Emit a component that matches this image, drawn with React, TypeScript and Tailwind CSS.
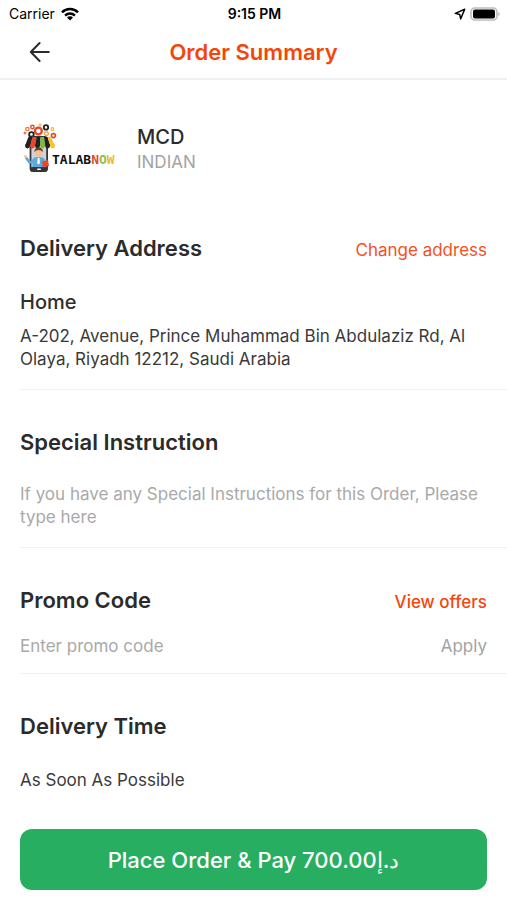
import React from "react";

function StatusBar() {
  return (
    <div className="grid h-7 grid-cols-3 items-center pr-[7px] pl-[9px] text-sm text-black">
      <div className="flex items-center gap-[6px]">
        <span>Carrier</span>
        <svg width="18" height="14" viewBox="0 0 18 14" fill="none" stroke="#000" strokeWidth="2.5" aria-hidden="true">
          <path d="M1 5.4a11.4 11.4 0 0 1 16 0" />
          <path d="M4.1 8.6a7 7 0 0 1 9.8 0" />
          <path d="M9 13.6l-3-3a4.2 4.2 0 0 1 6 0z" fill="#000" stroke="none" />
        </svg>
      </div>
      <div className="text-center font-semibold">9:15 PM</div>
      <div className="flex items-center justify-end gap-1">
        <svg width="12" height="12" viewBox="0 0 13 13" fill="none" stroke="#000" strokeWidth="1.6" strokeLinejoin="round" aria-hidden="true">
          <path d="M11.6 1.4L1.4 5.8l4.8 1.2 1 4.8z" />
        </svg>
        <svg width="30" height="15" viewBox="0 0 30 15" aria-hidden="true">
          <rect x="1" y="1" width="26" height="12" rx="4" fill="#fff" stroke="#bdbdbd" strokeWidth="1.6" />
          <rect x="3" y="2.6" width="22" height="8.8" rx="2" fill="#000" />
          <path d="M28.3 4.9q1.6.8 1.6 2.1t-1.6 2.1z" fill="#bdbdbd" />
        </svg>
      </div>
    </div>
  );
}

function Logo() {
  return (
    <svg width="97" height="54" viewBox="0 0 97 54" role="img" aria-label="Talabnow" className="shrink-0">
      <g fill="#fff">
        <circle cx="18.4" cy="11" r="3.4" stroke="#e8472b" strokeWidth="2.4" />
        <circle cx="26" cy="7.4" r="2.2" stroke="#222" strokeWidth="1.8" />
        <circle cx="11.4" cy="14.4" r="2.3" stroke="#222" strokeWidth="1.8" />
        <circle cx="7.4" cy="9" r="1.7" stroke="#f0743c" strokeWidth="1.3" />
        <circle cx="12.4" cy="7" r="1.7" stroke="#e8472b" strokeWidth="1.4" />
        <circle cx="20" cy="5" r="1.1" stroke="#f0a63c" strokeWidth="1" />
        <circle cx="5" cy="13" r="1" stroke="#e8472b" strokeWidth="1" />
        <circle cx="26.4" cy="13.6" r="1.9" stroke="#f3a83c" strokeWidth="1.4" />
        <circle cx="32.4" cy="9" r="1.4" stroke="#f3b23c" strokeWidth="1.1" />
        <circle cx="33.4" cy="15.6" r="2" stroke="#e8472b" strokeWidth="1.6" />
      </g>
      <rect x="10.5" y="17" width="16.6" height="34" rx="2.6" fill="#cdd4da" stroke="#33373c" strokeWidth="1.8" />
      <rect x="10.5" y="47" width="16.6" height="4.4" rx="1.5" fill="#33373c" />
      <rect x="17" y="48.6" width="4" height="1.4" rx=".7" fill="#fff" />
      <path d="M8.4 17h4.2l-2.6 9H5z" fill="#222" />
      <path d="M12.6 17h4.1l-1.7 9h-5z" fill="#e8472b" />
      <path d="M16.7 17h3.6v9H15z" fill="#222" />
      <path d="M20.3 17H24l1.4 9h-5.1z" fill="#7fb93b" />
      <path d="M24 17h3.6l2.8 9h-5z" fill="#222" />
      <path d="M27.6 17h3.2l4.2 9h-4.6z" fill="#f5c330" />
      <g>
        <circle cx="7.5" cy="26" r="2.4" fill="#222" />
        <circle cx="12.5" cy="26" r="2.4" fill="#e8472b" />
        <circle cx="17.5" cy="26" r="2.4" fill="#222" />
        <circle cx="22.6" cy="26" r="2.4" fill="#7fb93b" />
        <circle cx="27.6" cy="26" r="2.4" fill="#222" />
        <circle cx="32.6" cy="26" r="2.4" fill="#f5c330" />
      </g>
      <path d="M12.4 47v-7q0-3 6.2-3t6.4 3v7z" fill="#5fa8dc" />
      <path d="M14 41l-4.4 1.4L6 37.6" fill="none" stroke="#5fa8dc" strokeWidth="2.6" strokeLinejoin="round" />
      <circle cx="5.6" cy="36.4" r="1.5" fill="#f3c29c" />
      <ellipse cx="18.6" cy="33" rx="4" ry="4.4" fill="#f3c29c" />
      <path d="M14.4 32q-.2-4.6 4.2-4.6t4.3 4.6q-1.6-2-4.3-2t-4.2 2z" fill="#6b3f25" />
      <path d="M17.8 38h1.6l.6 5-1.4 1.4-1.4-1.4z" fill="#fff" />
      <path d="M22 41.6l6-1.6 1 6-6.2 1.4z" fill="#e8472b" />
      <text x="32" y="44" fontSize="13" fontWeight="700" fontFamily="'DejaVu Sans Mono', monospace" fill="#111">
        TALAB<tspan fill="#e8472b">N</tspan><tspan fill="#8cc152">O</tspan><tspan fill="#f5b921">W</tspan>
      </text>
    </svg>
  );
}

function SectionTitle({ children }: { children: React.ReactNode }) {
  return <h2 className="text-[22px] leading-8 font-semibold text-[#2b2b2b]">{children}</h2>;
}

export default function App() {
  return (
    <div className="min-h-screen bg-white font-['Inter','Noto_Sans',sans-serif] text-[17px] text-[#3a3a3a]">
      <StatusBar />
      <header className="grid grid-cols-[40px_1fr_40px] items-center border-b-2 border-[#f0f0f0] px-5 pt-2 pb-[10px]">
        <button type="button" aria-label="Back" className="flex h-8 items-center pl-2">
          <svg width="22" height="22" viewBox="0 0 22 22" fill="none" stroke="#2b2b2b" strokeWidth="2" strokeLinecap="round" strokeLinejoin="round">
            <path d="M11.6 2L2.8 11l8.8 9M2.8 11h18" />
          </svg>
        </button>
        <h1 className="text-center text-[22px] leading-8 font-semibold text-[#f4460b]">Order Summary</h1>
      </header>

      <main className="pb-[10px] pl-5">
        <div className="flex gap-5 pt-10 pr-5 pb-[22px]">
          <Logo />
          <div className="pt-1">
            <div className="text-xl leading-[26px] font-medium text-[#2b2b2b]">MCD</div>
            <div className="leading-6 text-[#a3a3a3]">INDIAN</div>
          </div>
        </div>

        <section className="border-b border-[#f2f2f2] pt-9 pr-5 pb-[18px]">
          <div className="flex items-center justify-between">
            <SectionTitle>Delivery Address</SectionTitle>
            <button type="button" className="pt-[6px] text-[#f4511e]">Change address</button>
          </div>
          <h3 className="mt-6 text-xl leading-7 font-medium text-[#2f2f2f]">Home</h3>
          <p className="mt-[9px] leading-[23px]">
            A-202, Avenue, Prince Muhammad Bin Abdulaziz Rd, Al Olaya, Riyadh 12212, Saudi Arabia
          </p>
        </section>

        <section className="border-b border-[#f2f2f2] pt-9 pr-5 pb-[18px]">
          <label htmlFor="instruction">
            <SectionTitle>Special Instruction</SectionTitle>
          </label>
          <textarea
            id="instruction"
            rows={2}
            placeholder="If you have any Special Instructions for this Order, Please type here"
            className="mt-[25px] block w-full resize-none overflow-hidden leading-[23px] outline-none placeholder:text-[#a9a9a9]"
          />
        </section>

        <section className="border-b border-[#f2f2f2] pt-9 pr-5 pb-[13px]">
          <div className="flex items-center justify-between">
            <label htmlFor="promo">
              <SectionTitle>Promo Code</SectionTitle>
            </label>
            <button type="button" className="pt-[6px] font-medium text-[#f4460b]">View offers</button>
          </div>
          <div className="mt-4 flex items-center justify-between">
            <input
              id="promo"
              type="text"
              placeholder="Enter promo code"
              className="h-7 min-w-0 flex-1 outline-none placeholder:text-[#a9a9a9]"
            />
            <button type="button" className="leading-7 text-[#a3a3a3]">Apply</button>
          </div>
        </section>

        <section className="pt-9 pr-5">
          <SectionTitle>Delivery Time</SectionTitle>
          <p className="mt-6 leading-7">As Soon As Possible</p>
          <button
            type="button"
            className="mt-[35px] block h-[61px] w-full rounded-xl bg-[#27ae60] pt-[2px] text-[22px] font-medium text-white"
          >
            Place Order &amp; Pay 700.00د.إ
          </button>
        </section>
      </main>
    </div>
  );
}
